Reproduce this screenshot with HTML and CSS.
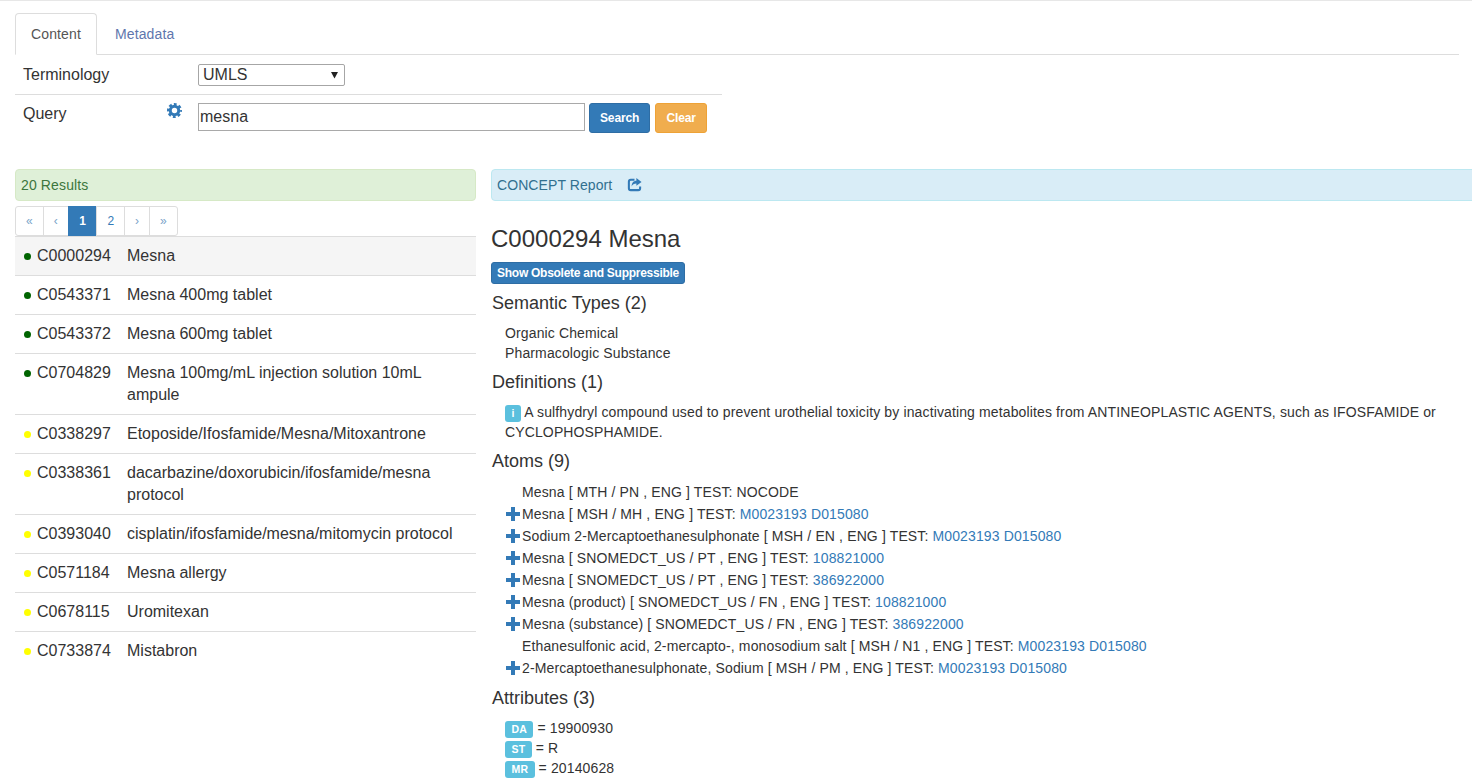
FILE: index.html
```html
<!DOCTYPE html>
<html lang="en">
<head>
    <meta charset="UTF-8">
    <meta name="viewport" content="width=device-width, initial-scale=1.0">
    <title>Content</title>
    <link rel="stylesheet" href="styles.css">
</head>
<body>
    <div class="page">
        <ul class="tabs">
            <li class="tab active">Content</li>
            <li class="tab"><a href="#">Metadata</a></li>
        </ul>

        <div class="query-form">
            <div class="form-row first">
                <div class="form-label">Terminology</div>
                <select class="term-select">
                    <option>UMLS</option>
                </select>
            </div>
            <div class="form-row second">
                <div class="form-label">
                    Query
                    <svg class="gear" viewBox="0 0 16 16" width="15" height="15">
                        <circle cx="8" cy="8" r="4.500" fill="none" stroke="#337ab7" stroke-width="3.200"/>
                        <circle cx="8" cy="8" r="6.700" fill="none" stroke="#337ab7" stroke-width="2.600" stroke-dasharray="3 2.260" stroke-dashoffset="1.500"/>
                    </svg>
                </div>
                <input class="query-input" type="text" value="mesna">
                <button class="btn btn-primary">Search</button>
                <button class="btn btn-warning">Clear</button>
            </div>
        </div>

        <div class="main">
            <!-- results list -->
            <div class="results">
                <div class="alert alert-success">20 Results</div>
                <ul class="pagination">
                    <li>&laquo;</li>
                    <li>&lsaquo;</li>
                    <li class="current">1</li>
                    <li class="num">2</li>
                    <li>&rsaquo;</li>
                    <li>&raquo;</li>
                </ul>
                <div class="result-row selected"><span class="dot green"></span><span class="cui">C0000294</span><span class="name">Mesna</span></div>
                <div class="result-row"><span class="dot green"></span><span class="cui">C0543371</span><span class="name">Mesna 400mg tablet</span></div>
                <div class="result-row"><span class="dot green"></span><span class="cui">C0543372</span><span class="name">Mesna 600mg tablet</span></div>
                <div class="result-row"><span class="dot green"></span><span class="cui">C0704829</span><span class="name">Mesna 100mg/mL injection solution 10mL ampule</span></div>
                <div class="result-row"><span class="dot yellow"></span><span class="cui">C0338297</span><span class="name">Etoposide/Ifosfamide/Mesna/Mitoxantrone</span></div>
                <div class="result-row"><span class="dot yellow"></span><span class="cui">C0338361</span><span class="name">dacarbazine/doxorubicin/ifosfamide/mesna protocol</span></div>
                <div class="result-row"><span class="dot yellow"></span><span class="cui">C0393040</span><span class="name">cisplatin/ifosfamide/mesna/mitomycin protocol</span></div>
                <div class="result-row"><span class="dot yellow"></span><span class="cui">C0571184</span><span class="name">Mesna allergy</span></div>
                <div class="result-row"><span class="dot yellow"></span><span class="cui">C0678115</span><span class="name">Uromitexan</span></div>
                <div class="result-row"><span class="dot yellow"></span><span class="cui">C0733874</span><span class="name">Mistabron</span></div>
            </div>

            <!-- concept report -->
            <div class="report">
                <div class="alert alert-info">
                    CONCEPT Report
                    <svg class="share" viewBox="0 0 16 16" width="15" height="15">
                        <path d="M8 3H4a2 2 0 0 0-2 2v7a2 2 0 0 0 2 2h8a2 2 0 0 0 2-2v-2" fill="none" stroke="#337ab7" stroke-width="2.200"/>
                        <path d="M10 1l5.500 4.200L10 9.400V7C7.500 7 6 8 5 10c0-3.800 2-6 5-6z" fill="#337ab7"/>
                    </svg>
                </div>
                <h2 class="concept-title">C0000294 Mesna</h2>
                <button class="btn btn-xs">Show Obsolete and Suppressible</button>

                <h4 class="section-title">Semantic Types (2)</h4>
                <div class="section-body">
                    <div>Organic Chemical</div>
                    <div>Pharmacologic Substance</div>
                </div>

                <h4 class="section-title">Definitions (1)</h4>
                <div class="section-body definition">
                    <span class="label">i</span> A sulfhydryl compound used to prevent urothelial toxicity by inactivating metabolites from ANTINEOPLASTIC AGENTS, such as IFOSFAMIDE or CYCLOPHOSPHAMIDE.
                </div>

                <h4 class="section-title">Atoms (9)</h4>
                <div class="section-body">
                    <div class="atom"><span class="atom-icon"></span>Mesna [ MTH / PN , ENG ] TEST: NOCODE</div>
                    <div class="atom"><span class="atom-icon"><svg viewBox="0 0 14 14" width="14" height="14"><path d="M5 0h4v5h5v4H9v5H5V9H0V5h5z"/></svg></span>Mesna [ MSH / MH , ENG ] TEST: <a href="#">M0023193 D015080</a></div>
                    <div class="atom"><span class="atom-icon"><svg viewBox="0 0 14 14" width="14" height="14"><path d="M5 0h4v5h5v4H9v5H5V9H0V5h5z"/></svg></span>Sodium 2-Mercaptoethanesulphonate [ MSH / EN , ENG ] TEST: <a href="#">M0023193 D015080</a></div>
                    <div class="atom"><span class="atom-icon"><svg viewBox="0 0 14 14" width="14" height="14"><path d="M5 0h4v5h5v4H9v5H5V9H0V5h5z"/></svg></span>Mesna [ SNOMEDCT_US / PT , ENG ] TEST: <a href="#">108821000</a></div>
                    <div class="atom"><span class="atom-icon"><svg viewBox="0 0 14 14" width="14" height="14"><path d="M5 0h4v5h5v4H9v5H5V9H0V5h5z"/></svg></span>Mesna [ SNOMEDCT_US / PT , ENG ] TEST: <a href="#">386922000</a></div>
                    <div class="atom"><span class="atom-icon"><svg viewBox="0 0 14 14" width="14" height="14"><path d="M5 0h4v5h5v4H9v5H5V9H0V5h5z"/></svg></span>Mesna (product) [ SNOMEDCT_US / FN , ENG ] TEST: <a href="#">108821000</a></div>
                    <div class="atom"><span class="atom-icon"><svg viewBox="0 0 14 14" width="14" height="14"><path d="M5 0h4v5h5v4H9v5H5V9H0V5h5z"/></svg></span>Mesna (substance) [ SNOMEDCT_US / FN , ENG ] TEST: <a href="#">386922000</a></div>
                    <div class="atom"><span class="atom-icon"></span>Ethanesulfonic acid, 2-mercapto-, monosodium salt [ MSH / N1 , ENG ] TEST: <a href="#">M0023193 D015080</a></div>
                    <div class="atom"><span class="atom-icon"><svg viewBox="0 0 14 14" width="14" height="14"><path d="M5 0h4v5h5v4H9v5H5V9H0V5h5z"/></svg></span>2-Mercaptoethanesulphonate, Sodium [ MSH / PM , ENG ] TEST: <a href="#">M0023193 D015080</a></div>
                </div>

                <h4 class="section-title">Attributes (3)</h4>
                <div class="section-body">
                    <div><span class="label">DA</span> = 19900930</div>
                    <div><span class="label">ST</span> = R</div>
                    <div><span class="label">MR</span> = 20140628</div>
                </div>
            </div>
        </div>
    </div>
</body>
</html>
```

FILE: styles.css
```css
html, body {
    margin: 0;
    padding: 0;
    overflow-x: hidden;
}

body {
    font-family: "Liberation Sans", Arial, sans-serif;
    font-size: 14px;
    line-height: 20px;
    letter-spacing: 0.13px;
    color: #333;
    background-color: #fff;
}

a {
    color: #337ab7;
    text-decoration: none;
}

.page {
    border-top: 1px solid #e7e7e7;
    padding: 12px 0 0 15px;
}

/* tabs */
.tabs {
    display: flex;
    list-style: none;
    margin: 0 13px 0 0;
    padding: 0;
    border-bottom: 1px solid #ddd;
}

.tab {
    padding: 10px 15px;
    margin: 0 2px -1px 0;
    border: 1px solid transparent;
    border-radius: 4px 4px 0 0;
}

.tab.active {
    color: #555;
    background-color: #fff;
    border-color: #ddd #ddd #fff;
}

.tab a {
    color: #5f76ad;
}

/* query form */
.query-form {
    width: 707px;
}

.form-row {
    display: flex;
    align-items: flex-start;
    box-sizing: border-box;
    padding-top: 8px;
    font-size: 16px;
    line-height: 22px;
    letter-spacing: 0;
}

.form-row.first {
    height: 40px;
    border-bottom: 1px solid #ddd;
}

.form-row.first .form-label {
    padding-top: 1px;
}

.form-row.second {
    height: 74px;
}

.form-label {
    width: 175px;
    padding-left: 8px;
    flex: none;
    position: relative;
}

.gear {
    position: absolute;
    left: 152px;
    top: 0;
}

.term-select {
    width: 147px;
    height: 22px;
    margin: 1px 0 0;
    padding: 0 0 1px 4px;
    font-family: inherit;
    font-size: 16px;
    color: #333;
    border: 1px solid #a6a6a6;
    border-radius: 2px;
    appearance: none;
    background: #fff url("data:image/svg+xml,%3Csvg xmlns='http://www.w3.org/2000/svg' width='8' height='7'%3E%3Cpath d='M0 0h7L3.500 6.500z' fill='%23222'/%3E%3C/svg%3E") no-repeat right 5px center;
}

.query-input {
    width: 387px;
    height: 28px;
    box-sizing: border-box;
    margin: 0 4px 0 0;
    padding: 0 1px;
    font-family: inherit;
    font-size: 16px;
    color: #333;
    border: 1px solid #a9a9a9;
}

.btn {
    height: 30px;
    padding: 0 10px;
    margin-right: 5px;
    font-family: inherit;
    font-size: 12px;
    font-weight: bold;
    letter-spacing: -0.15px;
    color: #fff;
    border: 1px solid #2e6da4;
    border-radius: 3px;
    background-color: #337ab7;
}

.btn-warning {
    width: 52px;
    padding: 0;
    background-color: #f0ad4e;
    border-color: #eea236;
}

.btn-xs {
    display: block;
    width: 194px;
    height: 22px;
    padding: 0;
    margin: 10px 0 0;
    letter-spacing: -0.27px;
}

/* two columns */
.main {
    display: flex;
    gap: 15px;
}

.results {
    width: 461px;
    flex: none;
}

.report {
    width: 1000px;
    flex: none;
}

.alert {
    height: 32px;
    box-sizing: border-box;
    padding: 5px;
    border: 1px solid;
    border-radius: 4px;
    line-height: 20px;
}

.alert-success {
    color: #3c763d;
    background-color: #dff0d8;
    border-color: #d6e9c6;
}

.alert-info {
    letter-spacing: 0.08px;
    color: #31708f;
    background-color: #d9edf7;
    border-color: #bce8f1;
}

.share {
    margin-left: 11px;
    vertical-align: -2px;
}

/* pagination */
.pagination {
    display: flex;
    width: fit-content;
    list-style: none;
    margin: 5px 0 0;
    padding: 0;
    font-size: 12px;
    line-height: 18px;
    letter-spacing: 0;
}

.pagination li {
    padding: 5px 10px;
    margin-left: -1px;
    color: #7aa3c9;
    border: 1px solid #ddd;
    background-color: #fff;
}

.pagination li:first-child {
    margin-left: 0;
    border-radius: 3px 0 0 3px;
}

.pagination li:last-child {
    border-radius: 0 3px 3px 0;
}

.pagination .current {
    padding: 5px 10.5px;
    color: #fff;
    font-weight: bold;
    background-color: #337ab7;
    border-color: #337ab7;
}

.pagination .num {
    color: #337ab7;
}

/* result rows */
.result-row {
    display: flex;
    align-items: flex-start;
    padding: 8px 8px 8px 9px;
    font-size: 16px;
    line-height: 22px;
    letter-spacing: 0;
    border-top: 1px solid #ddd;
}

.result-row.selected {
    background-color: #f5f5f5;
}

.dot {
    flex: none;
    width: 7px;
    height: 7px;
    margin: 8px 6px 0 0;
    border-radius: 50%;
}

.dot.green {
    background-color: #006400;
}

.dot.yellow {
    background-color: #ffff00;
}

.cui {
    flex: none;
    width: 90px;
}

/* concept report */
.concept-title {
    margin: 25px 0 0;
    font-size: 24px;
    font-weight: normal;
    line-height: 26px;
    letter-spacing: 0;
}

.section-title {
    margin: 9px 0 10px 1px;
    font-size: 18px;
    font-weight: normal;
    line-height: 20px;
    letter-spacing: 0;
}

.section-body {
    padding-left: 14px;
}

.definition {
    width: 945px;
}

.atom {
    line-height: 22px;
}

.atom-icon {
    display: inline-block;
    width: 17px;
    height: 14px;
    padding-left: 1px;
    box-sizing: border-box;
    vertical-align: -2px;
}

.atom-icon svg {
    display: block;
    fill: #337ab7;
}

.label {
    display: inline-block;
    padding: 1px 6.5px 2px;
    font-size: 10.5px;
    font-weight: bold;
    line-height: 14px;
    color: #fff;
    text-align: center;
    background-color: #5bc0de;
    border-radius: 3px;
}
```
